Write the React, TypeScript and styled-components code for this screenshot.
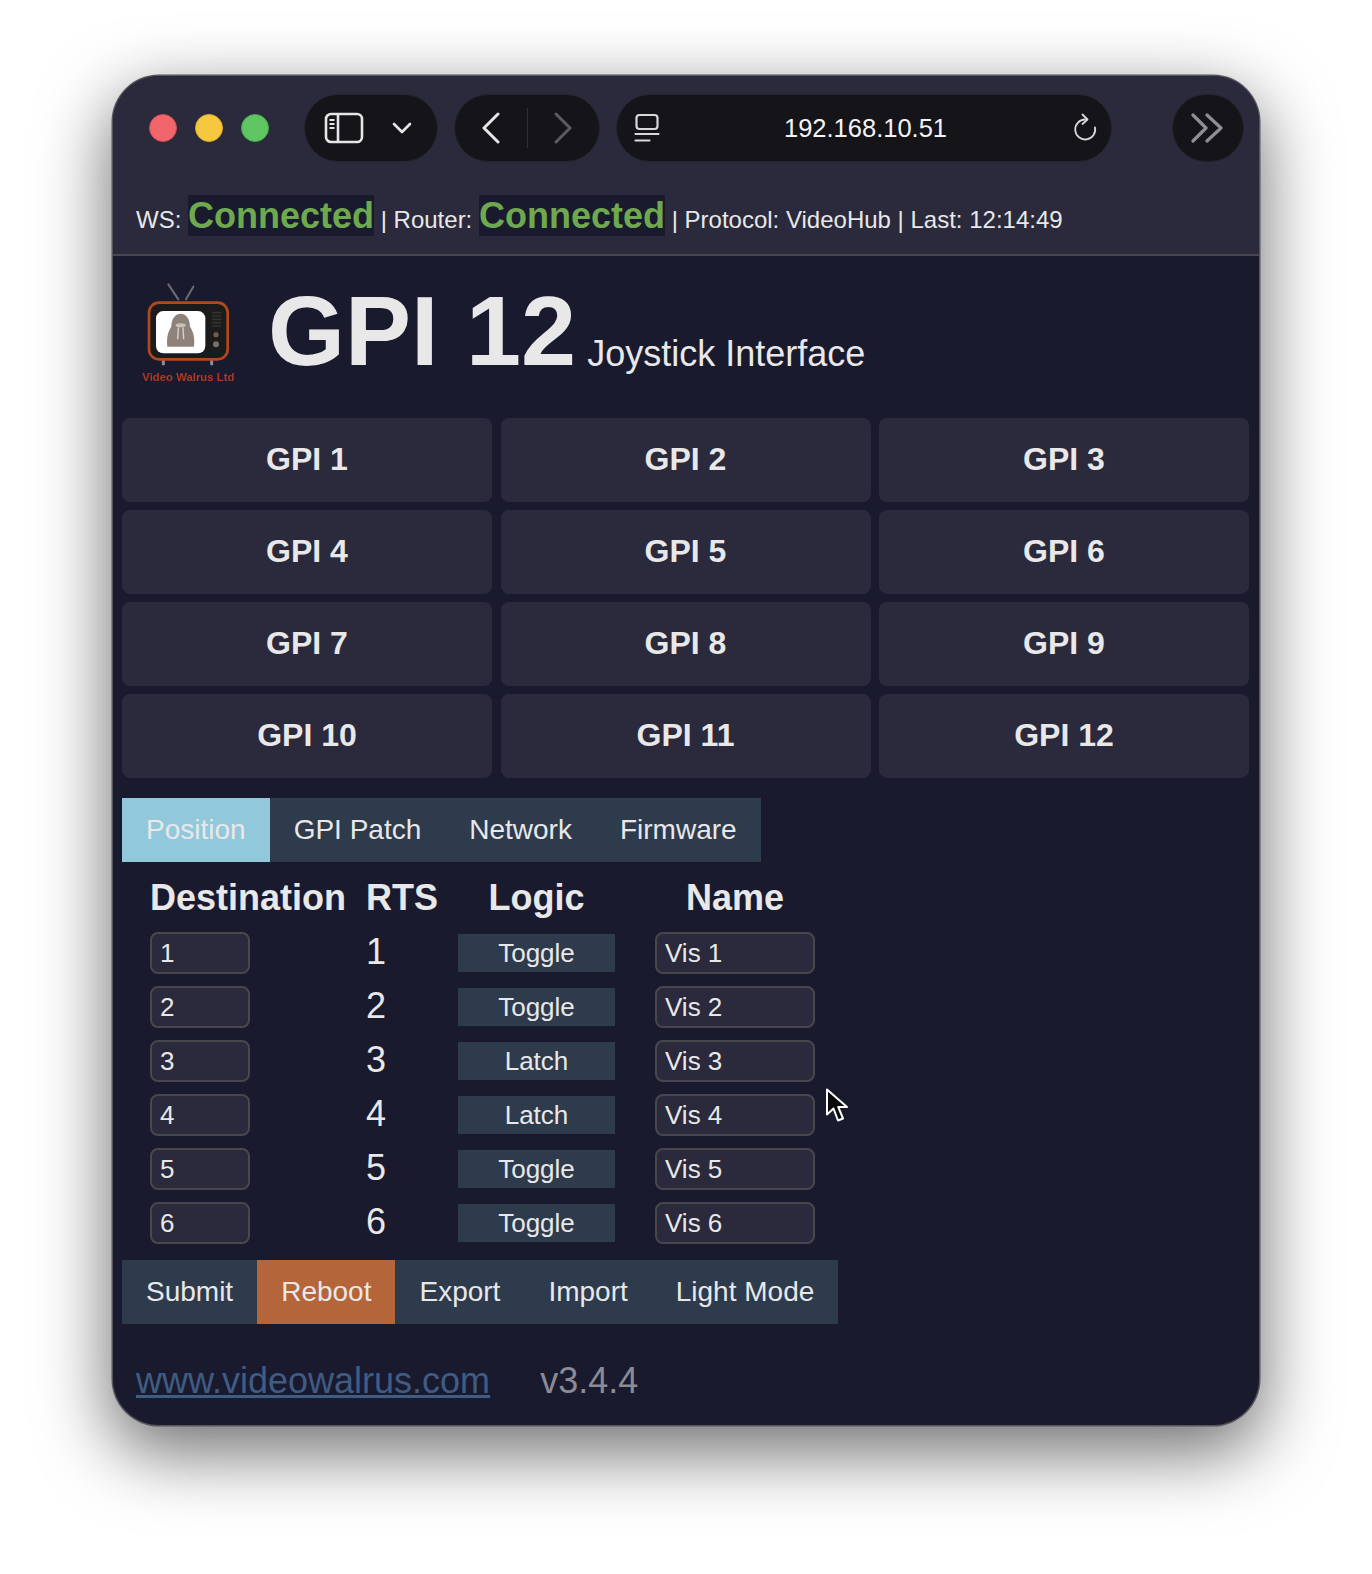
import * as React from 'react';
import styled, { createGlobalStyle } from 'styled-components';

const GPI_LIST = Array.from({ length: 12 }, (_, i) => `GPI ${i + 1}`);
const TAB_LIST = ['Position', 'GPI Patch', 'Network', 'Firmware'];
const ROW_LIST = [
    { id: 1, logic: 'Toggle' },
    { id: 2, logic: 'Toggle' },
    { id: 3, logic: 'Latch' },
    { id: 4, logic: 'Latch' },
    { id: 5, logic: 'Toggle' },
    { id: 6, logic: 'Toggle' },
];
const ACTION_LIST = ['Submit', 'Reboot', 'Export', 'Import', 'Light Mode'];

const GlobalStyle = createGlobalStyle`
    html, body {
        margin: 0;
        background: #fff;
    }
    body {
        font-family: "Liberation Sans", Arial, sans-serif;
        color: #e8e8e8;
    }
`;

const SidebarIcon = () => (
    <svg width="40" height="32" viewBox="0 0 40 32" fill="none" stroke="#e6e6e8" strokeWidth="2.6">
        <rect x="2" y="2" width="36" height="28" rx="5" />
        <path d="M14 2v28" />
        <path d="M5.5 8h5M5.5 12h5M5.5 16h5" strokeWidth="2" />
    </svg>
);

const ChevronDownIcon = () => (
    <svg width="20" height="14" viewBox="0 0 20 14" fill="none" stroke="#e6e6e8" strokeWidth="2.6" strokeLinecap="round" strokeLinejoin="round">
        <path d="M2 3l8 8 8-8" />
    </svg>
);

const ChevronIcon = ({ dir, color }: { dir: 'left' | 'right'; color: string }) => (
    <svg width="20" height="32" viewBox="0 0 20 32" fill="none" stroke={color} strokeWidth="3" strokeLinecap="round" strokeLinejoin="round">
        <path d={dir === 'left' ? 'M17 2L3 16l14 14' : 'M3 2l14 14L3 30'} />
    </svg>
);

const PageIcon = () => (
    <svg width="26" height="30" viewBox="0 0 26 30" fill="none" stroke="#d8d8da" strokeWidth="2.2" strokeLinecap="round">
        <rect x="2.5" y="2" width="21" height="14" rx="3" />
        <path d="M1.5 21h23M1.5 27.5h14" />
    </svg>
);

const ReloadIcon = () => (
    <svg width="26" height="30" viewBox="0 0 26 30" fill="none" stroke="#d8d8da" strokeWidth="1.8" strokeLinecap="round" strokeLinejoin="round">
        <path d="M12 6.5a10 10 0 1 0 10 8" />
        <path d="M9.5 1.5l5 5-5 4.5" />
    </svg>
);

const DoubleChevronIcon = () => (
    <svg width="34" height="30" viewBox="0 0 34 30" fill="none" stroke="#8f8f93" strokeWidth="3.2" strokeLinecap="round" strokeLinejoin="round">
        <path d="M2 2l13 13L2 28" />
        <path d="M16 2l14 13-14 13" />
    </svg>
);

const LogoIcon = () => (
    <LogoSvg width="104" height="108" viewBox="48 39 312 324">
        <path d="M145 55l30 45M220 62l-22 38" stroke="#6c6c70" strokeWidth="6" strokeLinecap="round" />
        <path d="M130 282v16M275 282v16" stroke="#8a8f94" strokeWidth="9" />
        <rect x="87" y="110" width="236" height="170" rx="30" fill="#1b1b1b" stroke="#b04a1c" strokeWidth="8" />
        <rect x="108" y="135" width="148" height="127" rx="22" fill="#fff" />
        <path d="M142 242c-3-26 2-46 12-60 0-52 56-52 56 0 10 14 15 34 12 60z" fill="#8f8279" />
        <path d="M175 186l-2 32M189 186l2 32" stroke="#d9d4cf" strokeWidth="4" strokeLinecap="round" />
        <ellipse cx="182" cy="178" rx="15" ry="6" fill="#c9c2bc" />
        <path d="M276 140h28M276 150h28M276 160h28M276 170h28M276 180h28" stroke="#33332f" strokeWidth="5" />
        <circle cx="288" cy="206" r="8" fill="#6b5a50" />
        <circle cx="288" cy="235" r="9" fill="#77716a" />
        <text x="205" y="346" textAnchor="middle" fontFamily="Liberation Sans, Arial, sans-serif" fontWeight="700" fontSize="34" fill="#b03a20" textLength="276">
            Video Walrus Ltd
        </text>
    </LogoSvg>
);

const App: React.FC = () => {
    return (
        <>
            <GlobalStyle />
            <Page>
                <Window>
                    <TopBar>
                        <Toolbar>
                            <TrafficLights>
                                <TrafficLight color="#f0666c" edge="#d64a4c" />
                                <TrafficLight color="#f5c83f" edge="#dcaa2c" />
                                <TrafficLight color="#5fc663" edge="#44ab49" />
                            </TrafficLights>
                            <SidebarPill>
                                <SidebarIcon />
                                <ChevronDownIcon />
                            </SidebarPill>
                            <NavPill>
                                <ChevronIcon dir="left" color="#e6e6e8" />
                                <NavDivider />
                                <ChevronIcon dir="right" color="#5c5c60" />
                            </NavPill>
                            <AddressPill>
                                <PageIcon />
                                <AddressText>192.168.10.51</AddressText>
                                <ReloadIcon />
                            </AddressPill>
                            <CirclePill>
                                <DoubleChevronIcon />
                            </CirclePill>
                        </Toolbar>
                        <StatusBar>
                            WS: <StatusValue>Connected</StatusValue> | Router: <StatusValue>Connected</StatusValue> | Protocol:
                            VideoHub | Last: 12:14:49
                        </StatusBar>
                    </TopBar>
                    <Content>
                        <Header>
                            <LogoIcon />
                            <Title>GPI 12</Title>
                            <Subtitle>Joystick Interface</Subtitle>
                        </Header>
                        <GpiGrid>
                            {GPI_LIST.map((label) => (
                                <GpiButton key={label}>{label}</GpiButton>
                            ))}
                        </GpiGrid>
                        <TabBar>
                            {TAB_LIST.map((label, i) => (
                                <BarButton key={label} $background={i === 0 ? '#92c8dc' : undefined}>
                                    {label}
                                </BarButton>
                            ))}
                        </TabBar>
                        <PositionTable>
                            <HeadCell $align="left">Destination</HeadCell>
                            <HeadCell $align="left">RTS</HeadCell>
                            <HeadCell $inset={40}>Logic</HeadCell>
                            <HeadCell>Name</HeadCell>
                            {ROW_LIST.map((row) => (
                                <React.Fragment key={row.id}>
                                    <DestinationInput defaultValue={row.id} />
                                    <RtsCell>{row.id}</RtsCell>
                                    <LogicSelect defaultValue={row.logic}>
                                        <option>Toggle</option>
                                        <option>Latch</option>
                                    </LogicSelect>
                                    <NameInput defaultValue={`Vis ${row.id}`} />
                                </React.Fragment>
                            ))}
                        </PositionTable>
                        <ActionBar>
                            {ACTION_LIST.map((label) => (
                                <BarButton key={label} $background={label === 'Reboot' ? '#b5653a' : undefined}>
                                    {label}
                                </BarButton>
                            ))}
                        </ActionBar>
                        <Footer>
                            <FooterLink href="#">www.videowalrus.com</FooterLink>
                            <Version>v3.4.4</Version>
                        </Footer>
                    </Content>
                    <Cursor viewBox="0 0 24 36" width="24" height="37">
                        <path d="M2 2v25l6.5-6 4.5 12 5-2-4.8-11.6H22z" fill="#0a0a0a" stroke="#fff" strokeWidth="2" strokeLinejoin="round" />
                    </Cursor>
                </Window>
            </Page>
        </>
    );
};

const Page = styled.div`
    width: 1372px;
    height: 1574px;
    padding: 75.5px 0 0 113px;
    box-sizing: border-box;
    overflow: hidden;
`;

const Window = styled.div`
    position: relative;
    width: 1146px;
    height: 1349.5px;
    border-radius: 46px;
    background: #1a1a2e;
    overflow: hidden;
    box-shadow: 0 0 0 1.5px #55555c, 0 24px 70px 4px rgba(0, 0, 0, 0.56);
`;

const TopBar = styled.header`
    background: #2a2a3c;
    border-bottom: 2px solid #47474d;
    height: 180px;
    box-sizing: border-box;
`;

const Toolbar = styled.div`
    display: flex;
    align-items: center;
    height: 68px;
    padding: 18.5px 0 0 36px;
`;

const TrafficLights = styled.div`
    display: flex;
    gap: 18px;
    margin-right: 35px;
`;

const TrafficLight = styled.span<{ color: string; edge: string }>`
    width: 28px;
    height: 28px;
    box-sizing: border-box;
    border-radius: 50%;
    background: ${(p) => p.color};
    border: 1px solid ${(p) => p.edge};
`;

const Pill = styled.div`
    display: flex;
    align-items: center;
    height: 68px;
    box-sizing: border-box;
    background: #141419;
    border: 1px solid #25252f;
    border-radius: 34px;
`;

const SidebarPill = styled(Pill)`
    width: 134px;
    padding: 0 25px 0 19px;
    justify-content: space-between;
    margin-right: 16px;
`;

const NavPill = styled(Pill)`
    width: 146px;
    padding: 0 26px;
    justify-content: space-between;
    margin-right: 16px;
`;

const NavDivider = styled.span`
    width: 1px;
    height: 40px;
    background: #2e2e33;
`;

const AddressPill = styled(Pill)`
    width: 496px;
    padding: 0 12px 0 17px;
    justify-content: space-between;
    margin-right: 60px;
`;

const AddressText = styled.span`
    font-size: 25.5px;
    color: #f4f4f5;
    margin-left: -2px;
`;

const CirclePill = styled(Pill)`
    width: 72px;
    justify-content: center;
`;

const StatusBar = styled.div`
    margin-top: 33px;
    padding-left: 23px;
    font-size: 24px;
    line-height: 42px;
    white-space: nowrap;
    color: #e8e8e8;
`;

const StatusValue = styled.span`
    font-size: 36px;
    font-weight: 700;
    color: #6ea84f;
    background: #1a1a2e;
    padding: 0;
`;

const Content = styled.main`
    padding: 0 10px 0 9px;
`;

const Header = styled.div`
    display: flex;
    align-items: flex-end;
    height: 162px;
    padding: 23px 0 0 14px;
    box-sizing: border-box;
`;

const LogoSvg = styled.svg`
    align-self: flex-start;
    filter: blur(0.6px);
`;

const Title = styled.h1`
    margin: 0 11px 38px 28px;
    font-size: 99px;
    line-height: 98px;
    font-weight: 700;
    color: #e8e8e8;
`;

const Subtitle = styled.span`
    margin-bottom: 44px;
    font-size: 36px;
    line-height: 40px;
    color: #e8e8e8;
`;

const GpiGrid = styled.div`
    display: grid;
    grid-template-columns: repeat(3, 1fr);
    grid-auto-rows: 84px;
    gap: 8px 8.5px;
`;

const GpiButton = styled.button`
    border: 0;
    border-radius: 8px;
    background: #2a2a3c;
    color: #e8e8e8;
    font-family: inherit;
    font-size: 32px;
    font-weight: 700;
`;

const TabBar = styled.nav`
    display: inline-flex;
    margin-top: 20.5px;
    vertical-align: top;
`;

const ActionBar = styled.div`
    display: inline-flex;
    vertical-align: top;
    margin-top: 16px;
`;

const BarButton = styled.button<{ $background?: string }>`
    height: 64px;
    padding: 0 24px;
    border: 0;
    background: ${(p) => p.$background || '#2e3b4c'};
    color: #e8e8e8;
    font-family: inherit;
    font-size: 28px;
    white-space: nowrap;
`;

const PositionTable = styled.div`
    display: grid;
    grid-template-columns: 216px 92px 197px 160px;
    grid-auto-rows: 41px;
    row-gap: 13px;
    align-items: center;
    padding: 16.5px 0 0 28px;
`;

const HeadCell = styled.div<{ $align?: string; $inset?: number }>`
    font-size: 36px;
    font-weight: 700;
    text-align: ${(p) => p.$align || 'center'};
    padding-right: ${(p) => p.$inset || 0}px;
    color: #e8e8e8;
    margin-top: -2px;
    white-space: nowrap;
`;

const Field = styled.input`
    height: 42px;
    box-sizing: border-box;
    border: 2px solid #47474d;
    border-radius: 8px;
    background: #2a2a3c;
    color: #e8e8e8;
    font-family: inherit;
    font-size: 26px;
    padding: 1px 8px 0;
    outline: none;
`;

const DestinationInput = styled(Field)`
    width: 100px;
`;

const NameInput = styled(Field)`
    width: 160px;
`;

const RtsCell = styled.div`
    font-size: 36px;
    line-height: 41px;
    margin-top: -3px;
`;

const LogicSelect = styled.select`
    width: 157px;
    height: 38px;
    border: 0;
    border-radius: 0;
    appearance: none;
    background: #2e3b4c;
    color: #e8e8e8;
    font-family: inherit;
    font-size: 26px;
    text-align: center;
    text-align-last: center;
    outline: none;
`;

const Footer = styled.footer`
    display: flex;
    align-items: baseline;
    gap: 50px;
    margin-top: 34px;
    padding-left: 14px;
    font-size: 36px;
    line-height: 46px;
`;

const FooterLink = styled.a`
    color: #3f5c85;
`;

const Version = styled.span`
    color: #8b8b94;
`;

const Cursor = styled.svg`
    position: absolute;
    left: 712px;
    top: 1011px;
`;

export default App;
